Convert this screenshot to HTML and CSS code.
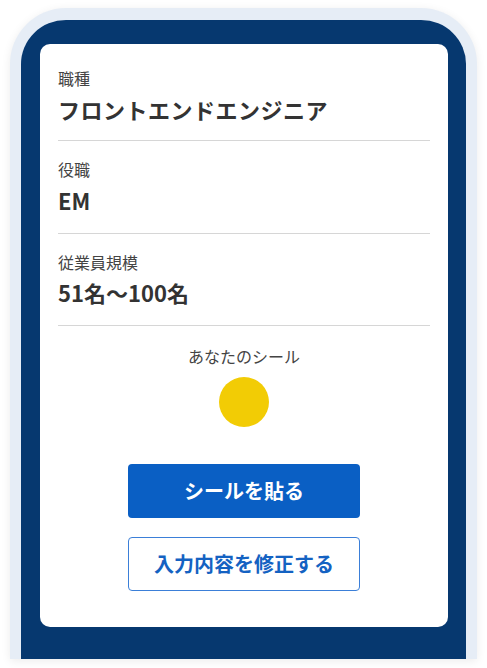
FILE: index.html
```html
<!DOCTYPE html>
<html lang="ja">
<head>
<meta charset="utf-8">
<link rel="stylesheet" href="styles.css">
</head>
<body>
<div class="frame">
  <div class="screen">
    <div class="card">
      <div class="field">
        <div class="label">職種</div>
        <div class="value value-kana">フロントエンドエンジニア</div>
      </div>
      <div class="field">
        <div class="label">役職</div>
        <div class="value">EM</div>
      </div>
      <div class="field">
        <div class="label">従業員規模</div>
        <div class="value">51名〜100名</div>
      </div>
      <div class="sticker">
        <div class="sticker-label">あなたのシール</div>
        <div class="dot"></div>
      </div>
      <div class="actions">
        <button class="btn btn-primary">シールを貼る</button>
        <button class="btn btn-outline">入力内容を修正する</button>
      </div>
    </div>
  </div>
</div>
</body>
</html>
```
FILE: styles.css
```css
html, body {
  margin: 0;
  padding: 0;
  background: #ffffff;
  font-family: "Noto Sans CJK JP", "Noto Sans", sans-serif;
}
body {
  width: 487px;
  height: 668px;
  overflow: hidden;
}
.frame {
  box-sizing: border-box;
  margin: 8px 0 0 10px;
  width: 467px;
  height: 651px;
  border: 11px solid #e6edf6;
  border-top-width: 12px;
  border-bottom: none;
  border-radius: 56px 56px 0 0;
  background: #06386f;
  box-shadow: 0 2px 10px rgba(0, 0, 0, 0.08);
  padding: 24px 18px 0 19px;
}
.card {
  background: #ffffff;
  border-radius: 10px;
  height: 583px;
  box-sizing: border-box;
  padding: 6px 18px 0;
  display: flex;
  flex-direction: column;
}
.field {
  padding: 16px 0 16px;
  border-bottom: 1px solid #d6d6d6;
  display: flex;
  flex-direction: column;
  gap: 2.5px;
}
.field:first-child {
  padding-bottom: 14.5px;
}
.label {
  font-size: 16px;
  line-height: 24px;
  color: #444444;
}
.value {
  font-size: 22px;
  line-height: 33px;
  font-weight: 700;
  color: #333333;
}
.value-kana {
  letter-spacing: 0.5px;
}
.sticker {
  margin-top: 17.5px;
  display: flex;
  flex-direction: column;
  align-items: center;
  gap: 9px;
}
.sticker-label {
  font-size: 16px;
  line-height: 24px;
  color: #444444;
}
.dot {
  width: 50px;
  height: 50px;
  border-radius: 50%;
  background: #f2cc05;
}
.actions {
  margin-top: 37px;
  display: flex;
  flex-direction: column;
  align-items: center;
  gap: 19px;
}
.btn {
  box-sizing: border-box;
  width: 232px;
  height: 54px;
  border-radius: 4px;
  font-family: "Noto Sans CJK JP", "Noto Sans", sans-serif;
  font-size: 20px;
  font-weight: 700;
  cursor: pointer;
}
.btn-primary {
  background: #0a5fc4;
  color: #ffffff;
  border: none;
}
.btn-outline {
  background: #ffffff;
  color: #1462c2;
  border: 1px solid #3b7fd8;
}
```
